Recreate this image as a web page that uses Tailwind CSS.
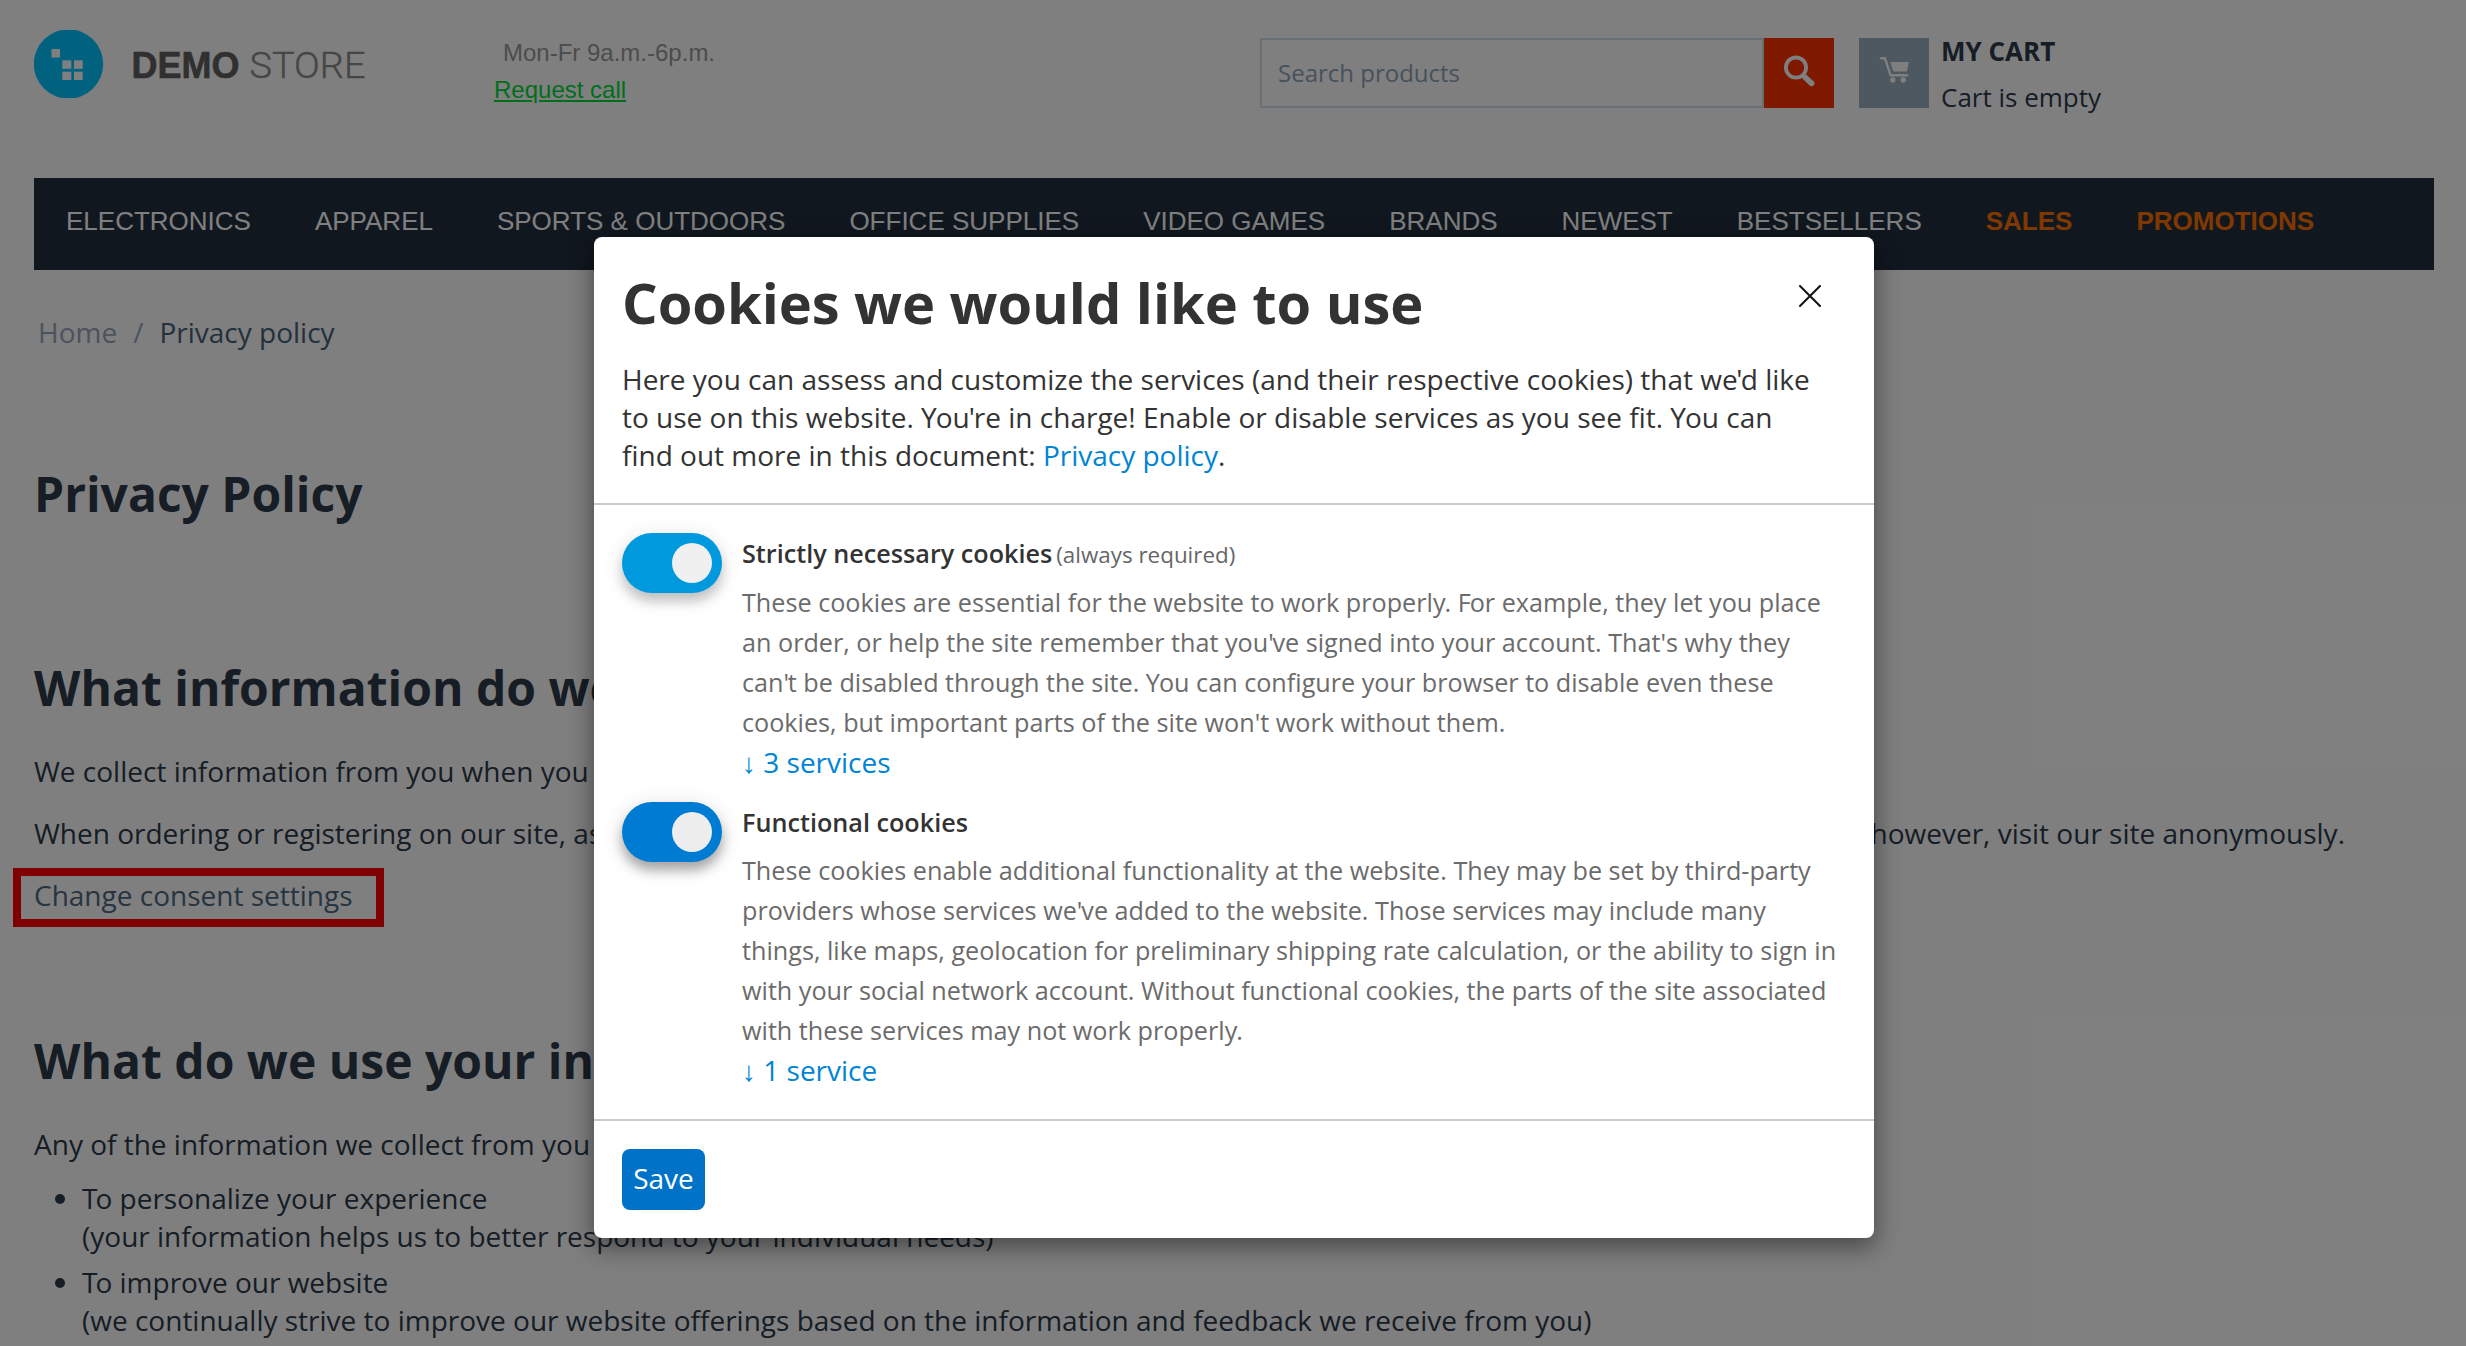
<!DOCTYPE html>
<html lang="en">
<head>
<meta charset="utf-8">
<title>Demo Store - Privacy policy</title>
<script src="https://cdn.jsdelivr.net/npm/@tailwindcss/browser@4"></script>
</head>
<body class="relative h-[1346px] w-[2466px] overflow-hidden bg-white font-['Open_Sans',sans-serif] text-[28px] leading-[38px] text-[#2c3a4a]">

<!-- Store page -->
<header class="flex h-[178px] items-start pl-[34px] pt-[30px]">
  <svg class="h-[68px] w-[340px] shrink-0" viewBox="0 0 340 68">
    <circle cx="34.5" cy="34" r="34.7" fill="#00c5fd"/>
    <g fill="#fff">
      <rect x="17.5" y="19" width="8.5" height="8.5"/>
      <rect x="28.3" y="30.3" width="9" height="8.5"/>
      <rect x="40" y="30.3" width="8.7" height="8.5"/>
      <rect x="28.3" y="41.7" width="9" height="8.3"/>
      <rect x="40" y="41.7" width="8.7" height="8.3"/>
    </g>
    <text x="97.5" y="48" font-family="Liberation Sans, sans-serif" font-weight="700" font-size="37" textLength="108" lengthAdjust="spacingAndGlyphs" fill="#606060" stroke="#606060" stroke-width="0.6">DEMO</text>
    <text x="215.5" y="48" font-family="Roboto, sans-serif" font-weight="300" font-size="36.5" textLength="116" lengthAdjust="spacingAndGlyphs" fill="#8c8c8c" stroke="#8c8c8c" stroke-width="0.4">STORE</text>
  </svg>
  <div class="ml-[120px] mt-1 w-[766px] font-['Liberation_Sans',sans-serif] text-[24px] leading-[37px]">
    <p class="pl-[9px] text-[#999]">Mon-Fr 9a.m.-6p.m.</p>
    <a class="text-[#00dd38] underline">Request call</a>
  </div>
  <div class="mt-2 flex">
    <div class="flex h-[70px] w-[504px] items-center border-2 border-[#d5dfe8] pl-4 text-[24px] text-[#8fa2b8]">Search products</div>
    <div class="size-[70px] bg-[#ff3300]">
      <svg viewBox="0 0 70 70" fill="none" stroke="#fff">
        <circle cx="32" cy="29.6" r="10.1" stroke-width="3.8"/>
        <path d="M39 37.2L41.3 39.4" stroke-width="4"/>
        <path d="M41 39.2L47.6 45.4" stroke-width="5.6" stroke-linecap="round"/>
      </svg>
    </div>
    <div class="ml-[25px] size-[70px] bg-[#9ab0c0]">
      <svg viewBox="0 0 70 70" fill="#fff">
        <path d="M22 20.3H26L31.6 37.3H48.2" fill="none" stroke="#fff" stroke-width="2.4" stroke-linecap="round" stroke-linejoin="round"/>
        <path d="M31.3 24H49.8L48 33.4H34.3Z"/>
        <circle cx="33.8" cy="42" r="2.7"/>
        <circle cx="44.2" cy="42" r="2.7"/>
      </svg>
    </div>
    <div class="-mt-[10px] ml-3 text-[26px] leading-[46px]">
      <p class="font-bold">MY CART</p>
      <p>Cart is empty</p>
    </div>
  </div>
</header>

<nav class="mx-[34px] flex h-[92px] w-[2400px] items-start gap-[64px] bg-[#232f3e] pl-8 pt-6 font-['Liberation_Sans',sans-serif] text-[26px] text-white">
  <a>ELECTRONICS</a><a>APPAREL</a><a>SPORTS &amp; OUTDOORS</a><a>OFFICE SUPPLIES</a><a>VIDEO GAMES</a><a>BRANDS</a><a>NEWEST</a><a>BESTSELLERS</a><a class="font-bold text-[#ff7300]">SALES</a><a class="font-bold text-[#ff7300]">PROMOTIONS</a>
</nav>

<main class="px-[34px]">
  <div class="flex gap-4 pl-1 pt-[43px] text-[#96a8bc]"><a>Home</a><span>/</span><span class="text-[#45627a]">Privacy policy</span></div>
  <h1 class="mt-[114px] text-[48px] font-bold leading-[58px]">Privacy Policy</h1>

  <h2 class="mt-[136px] text-[48px] font-bold leading-[58px]">What information do we collect?</h2>
  <p class="mt-[35px]">We collect information from you when you register on our site or place an order.</p>
  <p class="mt-6 flex w-[2311px] justify-between whitespace-nowrap"><span>When ordering or registering on our site, as appropriate, you may be asked to enter your name, e-mail or mailing address.</span><span>You may, however, visit our site anonymously.</span></p>
  <div class="relative mt-6 w-max text-[#4f6a82]">
    <a>Change consent settings</a>
    <span class="absolute -left-[21px] -top-2 h-[59px] w-[371px] border-8 border-[#ff0000]"></span>
  </div>

  <h2 class="mt-[118px] text-[48px] font-bold leading-[58px]">What do we use your information for?</h2>
  <p class="mt-[35px]">Any of the information we collect from you may be used in one of the following ways:</p>
  <ul class="mt-4 list-disc space-y-2 pl-12">
    <li><span class="tracking-[-2px]">T</span>o personalize your experience<br>(your information helps us to better respond to your individual needs)</li>
    <li><span class="tracking-[-2px]">T</span>o improve our website<br>(we continually strive to improve our website offerings based on the information and feedback we receive from you)</li>
  </ul>
</main>

<!-- Dimmed backdrop -->
<div class="absolute inset-0 bg-black/50"></div>

<!-- Cookie consent dialog -->
<section class="absolute left-[594px] top-[236.5px] w-[1280px] rounded-lg bg-white text-[#333] shadow-[0_8px_24px_2px_rgba(0,0,0,0.42)]">
  <div class="border-b-2 border-[#ccc] px-7 pb-[28.75px] pt-[27.4px]">
    <div class="flex items-start justify-between pr-[25px]">
      <h2 class="text-[56px] font-bold leading-[76px] tracking-[-0.03px]">Cookies we would like to use</h2>
      <svg class="mt-[21px] size-[22px]" viewBox="0 0 22 22" fill="none" stroke="#111" stroke-width="2" stroke-linecap="round"><path d="M1 1L21 21M21 1L1 21"/></svg>
    </div>
    <p class="mt-5 whitespace-nowrap">Here you can assess and customize the services (and their respective cookies) that w<span class="tracking-[-1.5px]">e'</span>d like<br>to use on this website. <span class="tracking-[-1px]">Y</span>o<span class="tracking-[-1px]">u'</span>re in charge! Enable or disable services as you see fit. <span class="tracking-[-1px]">Y</span>ou can<br>find out more in this document: <a class="text-[#0084d4]">Privacy policy</a>.</p>
  </div>

  <div class="flex flex-col gap-5 border-b-2 border-[#ccc] p-7 text-[25.2px] leading-10">
    <div class="flex gap-5">
      <div class="flex h-[60px] w-[100px] shrink-0 items-center justify-end rounded-full bg-[#0099de] pr-2.5 shadow-[0_8px_12px_rgba(0,0,0,0.2),0_4px_24px_rgba(0,0,0,0.1)]"><span class="size-10 rounded-full bg-[#f0f0f0]"></span></div>
      <div class="whitespace-nowrap text-[#6b6b6b]">
        <h3 class="mb-[9px] flex h-10 items-baseline gap-1 text-[#333]"><span class="font-semibold">Strictly necessary cookies</span><span class="text-[22.4px] text-[#666]">(always required)</span></h3>
        <p>These cookies are essential for the website to work properl<span class="tracking-[-1px]">y</span>. <span class="tracking-[-1px]">F</span>or example, they let you place<br>an order, or help the site remember that you<span class="tracking-[-1.2px]">'</span>ve signed into your account. That's why they<br>can<span class="tracking-[-1.2px]">'</span>t be disabled through the site. <span class="tracking-[-1px]">Y</span>ou can configure your browser to disable even these<br>cookies, but important parts of the site won't work without them.</p>
        <a class="block h-10 font-['Open_Sans','Liberation_Sans',sans-serif] text-[28px] text-[#0084d4]">↓ 3 services</a>
      </div>
    </div>
    <div class="flex gap-5">
      <div class="flex h-[60px] w-[100px] shrink-0 items-center justify-end rounded-full bg-[#007bd3] pr-2.5 shadow-[0_8px_12px_rgba(0,0,0,0.3),0_4px_24px_rgba(0,0,0,0.12)]"><span class="size-10 rounded-full bg-[#ededed]"></span></div>
      <div class="whitespace-nowrap pb-[0.6px] text-[#6b6b6b]">
        <h3 class="mb-[8.4px] font-semibold text-[#333]">Functional cookies</h3>
        <p>These cookies enable additional functionality at the website. They may be set by third-party<br>providers whose services we<span class="tracking-[-1px]">'</span>ve added to the website. Those services may include many<br>things, like maps, geolocation for preliminary shipping rate calculation, or the ability to sign in<br>with your social network account. Without functional cookies, the parts of the site associated<br>with these services may not work properl<span class="tracking-[-1px]">y</span>.</p>
        <a class="block h-10 font-['Open_Sans','Liberation_Sans',sans-serif] text-[28px] text-[#0084d4]">↓ 1 service</a>
      </div>
    </div>
  </div>

  <div class="p-7">
    <button class="block h-[61px] w-[83px] rounded-lg bg-[#0073c9] pb-[3px] text-[28px] text-white">Save</button>
  </div>
</section>
</body>
</html>
